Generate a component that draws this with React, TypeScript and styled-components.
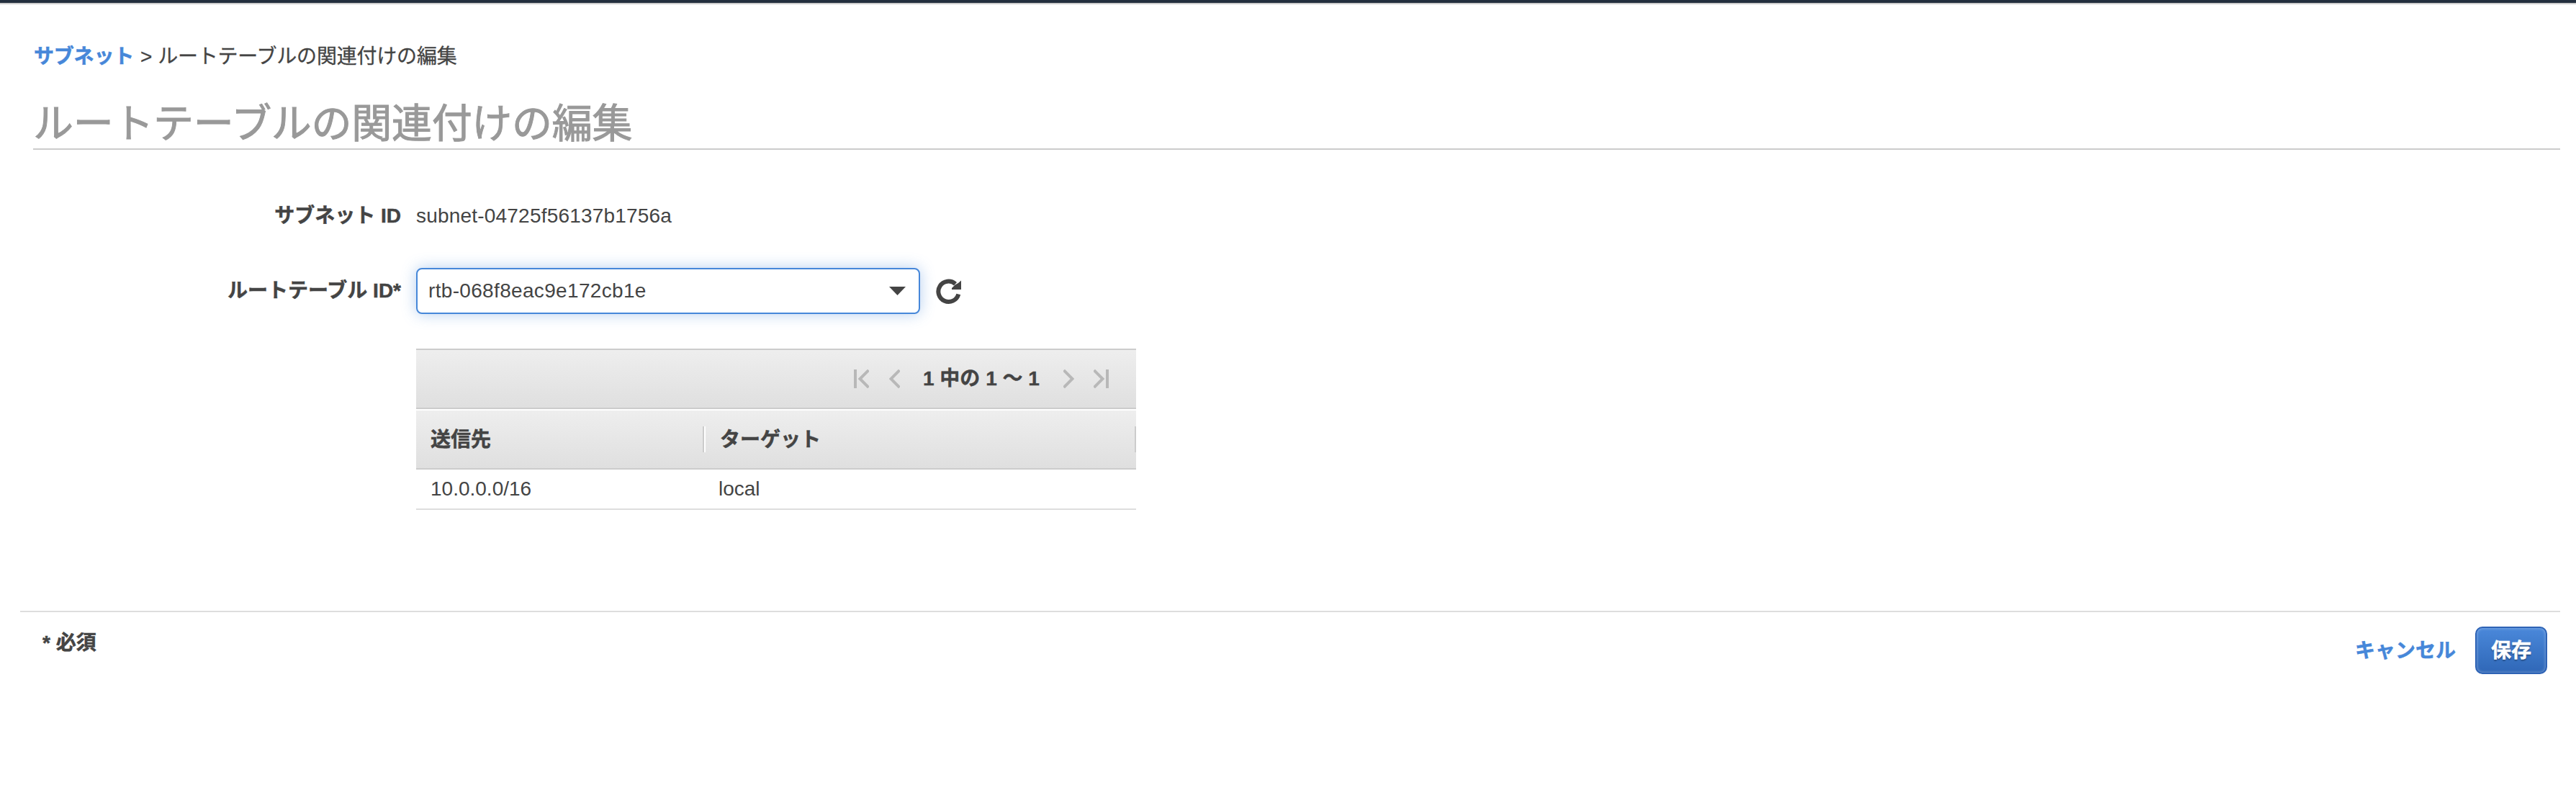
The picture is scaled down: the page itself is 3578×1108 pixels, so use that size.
import React from "react";
import styled, { createGlobalStyle } from "styled-components";

const GlobalStyle = createGlobalStyle`
  * { box-sizing: border-box; }
  body {
    margin: 0;
    background: #fff;
    color: #444;
    font-family: "Liberation Sans", "Noto Sans CJK JP", sans-serif;
    font-size: 28px;
    line-height: 40px;
  }
`;

const Page = styled.div`
  min-height: 1108px;
  border-top: 4px solid #232f3e;
`;

const Inner = styled.main`
  border-top: 2px solid #ccc;
  padding: 53px 22px 0 28px;
`;

const Breadcrumb = styled.nav`
  padding-left: 19px;
  letter-spacing: -0.2px;
  white-space: pre;
  -webkit-text-stroke: 0.3px currentColor;
`;

const Link = styled.a`
  color: #4687d9;
  font-weight: bold;
  text-decoration: none;
  -webkit-text-stroke: 0.5px currentColor;
`;

const Separator = styled.span`
  margin: 0 8px 0 9px;
`;

const Title = styled.h1`
  margin: 37px 0 0 18px;
  height: 72px;
  border-bottom: 2px solid #ccc;
  color: #999;
  font-size: 56px;
  font-weight: normal;
  letter-spacing: -0.3px;
  line-height: 72px;
  -webkit-text-stroke: 1px currentColor;
`;

const Form = styled.form`
  display: grid;
  grid-template-columns: 529px 1fr;
  column-gap: 21px;
  padding-top: 72px;
`;

const Label = styled.label`
  font-weight: bold;
  text-align: right;
  -webkit-text-stroke: 0.5px currentColor;
`;

const Value = styled.span<{ $spacing?: number }>`
  letter-spacing: ${(p) => p.$spacing ?? 0}px;
`;

const SelectRow = styled.div`
  display: flex;
  align-items: center;
  gap: 21px;
  height: 64px;
`;

const SelectLabel = styled(Label)`
  line-height: 64px;
`;

const RowGap = styled.div<{ $h: number }>`
  grid-column: 1 / -1;
  height: ${(p) => p.$h}px;
`;

const Select = styled.div`
  display: flex;
  align-items: center;
  justify-content: space-between;
  width: 700px;
  height: 64px;
  padding: 0 18px 0 15px;
  border: 2px solid #4687d9;
  border-radius: 8px;
  background: #fff;
  box-shadow: 0 0 20px rgba(70, 135, 217, 0.4);
`;

const RefreshButton = styled.button`
  display: flex;
  padding: 2px 0 0;
  border: 0;
  background: none;
`;

const Table = styled.section`
  grid-column: 2;
  width: 1000px;
`;

const Pager = styled.div`
  display: flex;
  align-items: center;
  justify-content: flex-end;
  height: 84px;
  padding-right: 38px;
  border: solid #ccc;
  border-width: 2px 0;
  background: linear-gradient(#eee, #dfdfdf);
`;

const PagerText = styled.span`
  width: 160px;
  margin: 0 35px 0 32px;
  font-weight: bold;
  text-align: center;
  white-space: nowrap;
  -webkit-text-stroke: 0.4px currentColor;
`;

const HeaderRow = styled.div`
  display: flex;
  align-items: center;
  height: 82px;
  margin-top: 2px;
  border-bottom: 2px solid #ccc;
  background: linear-gradient(#eee, #dfdfdf);
`;

const HeaderCell = styled.div<{ $width: number; $pad: number; $last?: boolean }>`
  width: ${(p) => p.$width}px;
  height: 36px;
  padding-left: ${(p) => p.$pad}px;
  border-right: 2px solid #ccc;
  box-shadow: ${(p) => (p.$last ? "none" : "2px 0 0 #fff")};
  font-weight: bold;
  line-height: 37px;
  -webkit-text-stroke: 0.5px currentColor;
`;

const BodyRow = styled.div`
  display: flex;
  height: 56px;
  border-bottom: 2px solid #ddd;
  line-height: 53px;
`;

const BodyCell = styled.div<{ $width: number }>`
  width: ${(p) => p.$width}px;
  padding-left: 20px;
`;

const Footer = styled.footer`
  display: flex;
  justify-content: space-between;
  margin-top: 140px;
  padding: 20px 18px 0 31px;
  border-top: 2px solid #ddd;
`;

const Required = styled.span`
  padding-top: 3px;
  font-weight: bold;
  -webkit-text-stroke: 0.5px currentColor;
`;

const Actions = styled.div`
  display: flex;
  align-items: center;
  gap: 27px;
`;

const CancelLink = styled(Link)`
  padding-top: 2px;
`;

const SaveButton = styled.button`
  width: 100px;
  height: 66px;
  padding: 2px 0 0;
  border: 2px solid #2e63b5;
  border-radius: 10px;
  background: linear-gradient(#4a88da, #2f67b7);
  box-shadow: inset 0 0 4px rgba(255, 255, 255, 0.4);
  color: #fff;
  font: bold 28px/40px "Liberation Sans", "Noto Sans CJK JP", sans-serif;
  text-shadow: 0 2px 2px rgba(0, 0, 0, 0.4);
  -webkit-text-stroke: 0.5px currentColor;
`;

const Chevron = styled.svg<{ $gap?: number }>`
  flex: none;
  margin-right: ${(p) => p.$gap ?? 0}px;
  fill: none;
  stroke: #b8b8b8;
  stroke-width: 4;
`;

export default function App() {
  return (
    <>
      <GlobalStyle />
      <Page>
        <Inner>
          <Breadcrumb>
            <Link>サブネット</Link>
            <Separator>&gt;</Separator>
            <span>ルートテーブルの関連付けの編集</span>
          </Breadcrumb>
          <Title>ルートテーブルの関連付けの編集</Title>
          <Form>
            <Label>サブネット ID</Label>
            <Value $spacing={0.2}>subnet-04725f56137b1756a</Value>
            <RowGap $h={52} />
            <SelectLabel>ルートテーブル ID*</SelectLabel>
            <SelectRow>
              <Select>
                <Value $spacing={0.33}>rtb-068f8eac9e172cb1e</Value>
                <svg width="23" height="12" viewBox="0 0 23 12">
                  <path d="M0 0H23L11.5 12Z" fill="#444" />
                </svg>
              </Select>
              <RefreshButton type="button">
                <svg width="36" height="36" viewBox="0 0 36 36">
                  <path d="M32.3 21.5A14.2 14.2 0 1 1 28 7.2" fill="none" stroke="#444" strokeWidth="6" />
                  <path d="M36 2.5V15H23V13L27.5 8.5L32 6Z" fill="#444" />
                </svg>
              </RefreshButton>
            </SelectRow>
            <RowGap $h={48} />
            <Table>
              <Pager>
                <Chevron $gap={28} width="21" height="26" viewBox="0 0 21 26">
                  <path d="M2 0V26M20.5 1L8.5 13L20.5 25" />
                </Chevron>
                <Chevron width="15" height="26" viewBox="0 0 15 26">
                  <path d="M14.5 1L2.5 13L14.5 25" />
                </Chevron>
                <PagerText>1 中の 1 ～ 1</PagerText>
                <Chevron $gap={27} width="15" height="26" viewBox="0 0 15 26">
                  <path d="M.5 1L12.5 13L.5 25" />
                </Chevron>
                <Chevron width="21" height="26" viewBox="0 0 21 26">
                  <path d="M.5 1L12.5 13L.5 25M19 0V26" />
                </Chevron>
              </Pager>
              <HeaderRow>
                <HeaderCell $width={400} $pad={20}>送信先</HeaderCell>
                <HeaderCell $width={600} $pad={22} $last>ターゲット</HeaderCell>
              </HeaderRow>
              <BodyRow>
                <BodyCell $width={400}>10.0.0.0/16</BodyCell>
                <BodyCell $width={600}>local</BodyCell>
              </BodyRow>
            </Table>
          </Form>
          <Footer>
            <Required>* 必須</Required>
            <Actions>
              <CancelLink>キャンセル</CancelLink>
              <SaveButton type="button">保存</SaveButton>
            </Actions>
          </Footer>
        </Inner>
      </Page>
    </>
  );
}
